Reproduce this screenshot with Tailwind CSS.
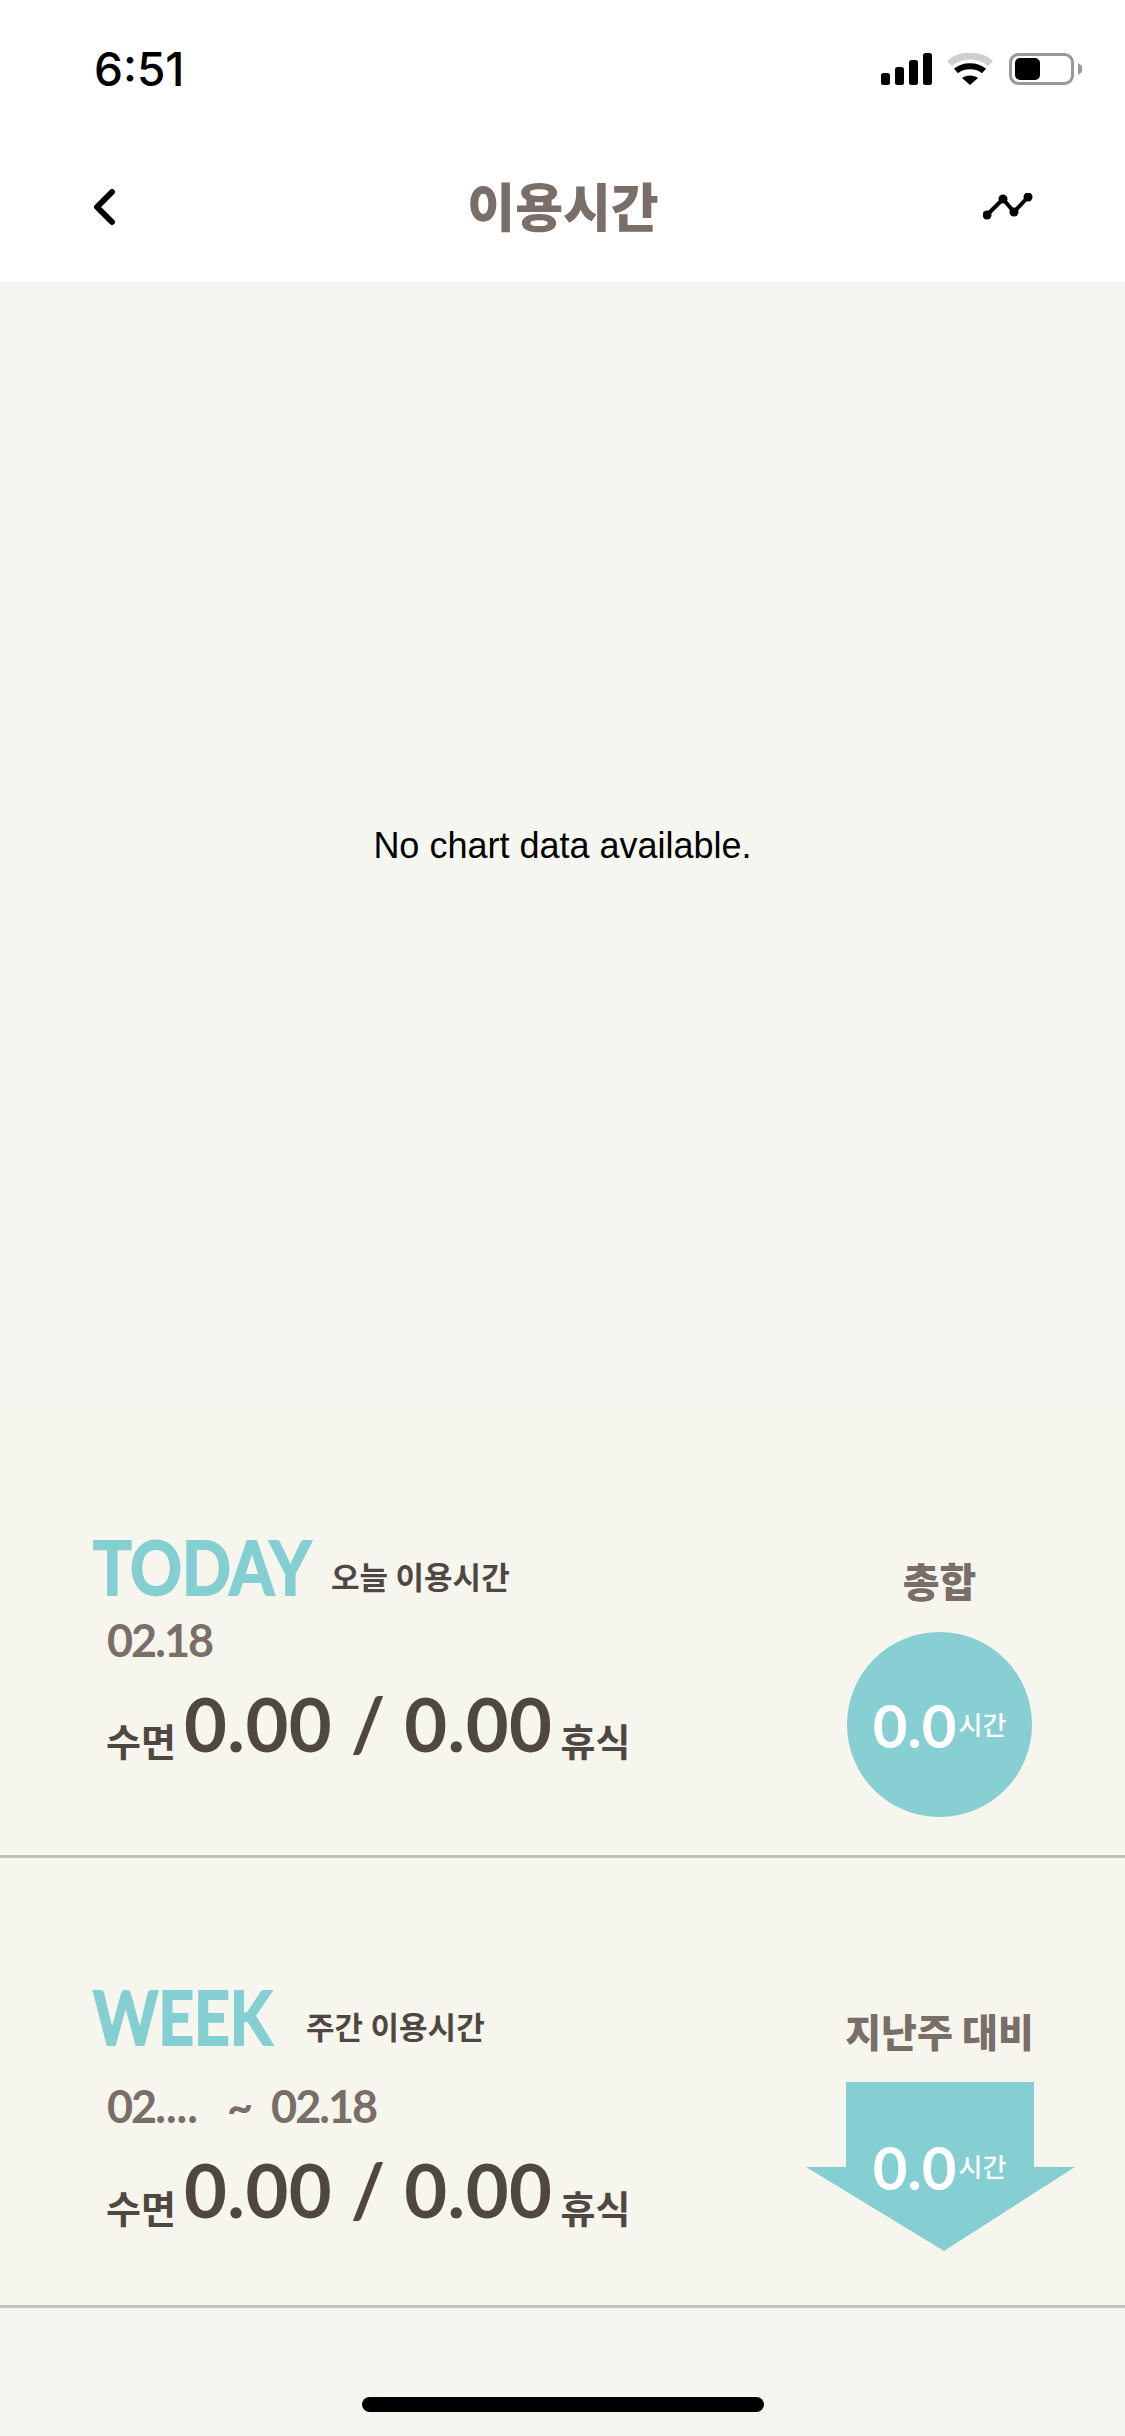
<!DOCTYPE html>
<html lang="ko">
<head>
<meta charset="utf-8">
<script src="https://cdn.jsdelivr.net/npm/@tailwindcss/browser@4"></script>
</head>
<body class="m-0">
<div class="relative w-[1125px] h-[2436px] overflow-hidden flex flex-col bg-[#f6f6f0] font-['Lato','Noto_Sans_CJK_KR',sans-serif]">
  <div class="bg-white h-[282px] shrink-0 flex flex-col">
    <div class="h-[132px] flex items-start justify-between pl-[94px] pr-[42px] pt-[44px]">
      <span class="font-['Inter',sans-serif] font-medium text-[46px] leading-[50px] text-black">6:51</span>
      <div class="flex items-start gap-[15px] mt-[9px]">
        <svg width="51" height="32" viewBox="0 0 51 32" fill="#000"><rect x="0" y="20" width="9" height="12" rx="2.5"/><rect x="14" y="14" width="9" height="18" rx="2.5"/><rect x="28" y="7" width="9" height="25" rx="2.5"/><rect x="42" y="0" width="9" height="32" rx="2.5"/></svg>
        <svg width="46" height="32" viewBox="0 0 46 32"><path d="M2.5 10.5C13 0.5 33 0.5 43.5 10.5" fill="none" stroke="#cfcfcf" stroke-width="7"/><path d="M9 18C16 11.500 30 11.500 37 18" fill="none" stroke="#000" stroke-width="6"/><path d="M15 25C19 21.500 27 21.500 31 25L23 32Z" fill="#000"/></svg>
        <svg width="74" height="32" viewBox="0 0 74 32" class="ml-px"><rect x="1.500" y="1.500" width="62" height="29" rx="8" fill="none" stroke="#999" stroke-width="3"/><rect x="6" y="5" width="25" height="22" rx="5" fill="#000"/><path d="M69 10L73 13V19L69 22Z" fill="#999"/></svg>
      </div>
    </div>
    <div class="relative flex-1 flex items-center justify-between pl-[93px] pr-[92px]">
      <div class="w-[50px] flex"><svg width="24" height="38" viewBox="0 0 24 38" fill="none"><path d="M19 4L4 19L19 34" stroke="#000" stroke-width="6" stroke-linecap="round" stroke-linejoin="round"/></svg></div>
      <h1 class="text-[52px] leading-[56px] font-black text-[#7a6e68] m-0">이용시간</h1>
      <svg width="50" height="28" viewBox="0 0 50 28" fill="none"><path d="M4 22L20 6L31 19L45 4" stroke="#000" stroke-width="4" stroke-linejoin="round"/><circle cx="4" cy="22" r="4.500" fill="#000"/><circle cx="20" cy="6" r="4.500" fill="#000"/><circle cx="31" cy="19" r="4.500" fill="#000"/><circle cx="45" cy="4" r="4.500" fill="#000"/></svg>
    </div>
  </div>

  <div class="h-[1128px] shrink-0 flex items-center justify-center">
    <p class="font-['Liberation_Sans',sans-serif] text-[36px] leading-[44px] text-black m-0">No chart data available.</p>
  </div>

  <section class="relative h-[448px] shrink-0 border-b-[3px] border-[#c1c3b5] bg-[#f7f6ee] flex pl-[93px] pr-[93px] pt-[130px]">
    <div class="flex-1 flex flex-col">
      <div class="flex items-end gap-[20px] h-[54px]">
        <span class="block w-[218px] origin-left scale-x-[0.87] text-[74px] leading-[54px] font-bold text-[#84cfd2] [-webkit-text-stroke:2px_#84cfd2]">TODAY</span>
        <span class="text-[31px] leading-[34px] font-bold text-[#4f4742]">오늘 이용시간</span>
      </div>
      <div class="pl-[14px] mt-[30px] text-[45px] leading-[33px] font-bold tracking-[-2px] text-[#7a6e68]">02.18</div>
      <div class="pl-[13px] mt-[33px] flex items-end gap-[8px] text-[#4f4742] font-bold">
        <span class="text-[38px] leading-[40px]">수면</span>
        <span class="text-[74px] leading-[68px] tracking-[0.5px] whitespace-pre mb-[3px]">0.00 / 0.00</span>
        <span class="text-[38px] leading-[40px]">휴식</span>
      </div>
    </div>
    <div class="w-[185px] flex flex-col items-center pt-[20px]">
      <span class="text-[40px] leading-[44px] font-black text-[#7a6e68]">총합</span>
      <div class="mt-[28px] w-[185px] h-[185px] rounded-full bg-[#87cfd2] flex items-center justify-center text-white font-bold gap-[2px]">
        <span class="text-[60px] leading-[60px]">0.0</span><span class="text-[26px] leading-[30px] font-medium">시간</span>
      </div>
    </div>
  </section>

  <section class="relative h-[450px] shrink-0 border-b-[3px] border-[#c1c3b5] bg-[#f7f6ee] flex pl-[93px] pr-[93px] pt-[132px]">
    <div class="flex-1 flex flex-col">
      <div class="flex items-end gap-[34px] h-[54px]">
        <span class="block w-[179px] origin-left scale-x-[0.84] text-[74px] leading-[54px] font-bold text-[#84cfd2] [-webkit-text-stroke:2px_#84cfd2]">WEEK</span>
        <span class="text-[31px] leading-[34px] font-bold text-[#4f4742]">주간 이용시간</span>
      </div>
      <div class="pl-[14px] mt-[46px] flex text-[45px] leading-[33px] font-bold tracking-[-2px] text-[#7a6e68]">
        <span>02<span class="tracking-[0px]">....</span></span><span class="ml-[29px]">~</span><span class="ml-[20px]">02.18</span>
      </div>
      <div class="pl-[13px] mt-[33px] flex items-end gap-[8px] text-[#4f4742] font-bold">
        <span class="text-[38px] leading-[40px]">수면</span>
        <span class="text-[74px] leading-[68px] tracking-[0.5px] whitespace-pre mb-[4px]">0.00 / 0.00</span>
        <span class="text-[38px] leading-[40px]">휴식</span>
      </div>
    </div>
    <div class="relative w-[185px] flex flex-col items-center">
      <span class="absolute left-[-94px] top-[20px] w-[373px] text-center text-[39px] leading-[44px] font-black text-[#7a6e68]">지난주 대비</span>
      <svg class="absolute left-[-41px] top-[92px]" width="269" height="169" viewBox="0 0 269 169"><path d="M40 0H228V85H269L138 169L0 85H40Z" fill="#85ced1"/></svg>
      <div class="absolute left-0 top-[147px] w-[185px] flex items-center justify-center text-white font-bold gap-[2px]">
        <span class="text-[60px] leading-[60px]">0.0</span><span class="text-[26px] leading-[30px] font-medium">시간</span>
      </div>
    </div>
  </section>

  <div class="absolute left-[362px] top-[2397px] w-[402px] h-[15px] rounded-full bg-black"></div>
</div>
</body>
</html>
